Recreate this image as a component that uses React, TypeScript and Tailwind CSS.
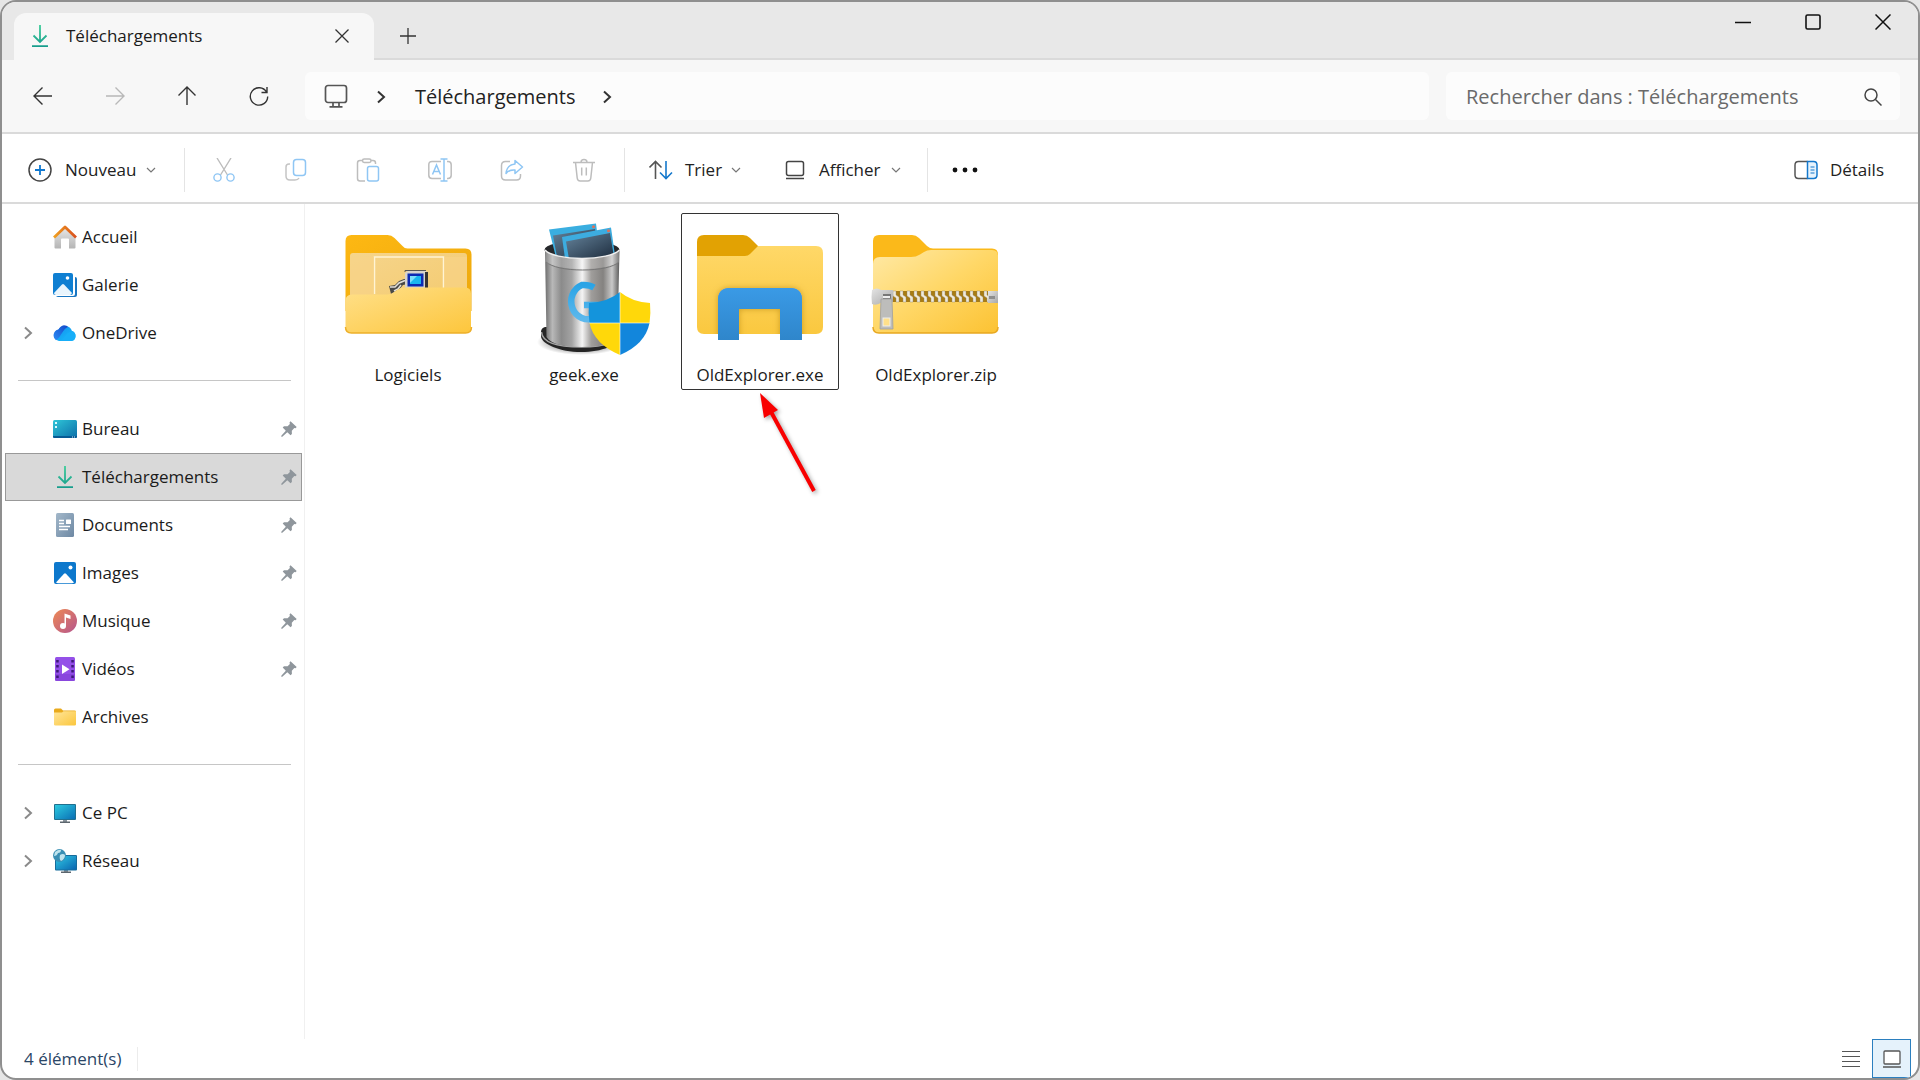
import React from 'react';

const ChevronRight: React.FC<{ className?: string }> = ({ className = 'h-4 w-4 text-[#333]' }) => (
  <svg viewBox="0 0 16 16" className={className} fill="none" stroke="currentColor" strokeWidth="2">
    <path d="M5 2.5 11 8l-6 5.500" />
  </svg>
);

const ChevronDown = () => (
  <svg viewBox="0 0 12 12" className="h-3 w-3 text-[#777]" fill="none" stroke="currentColor" strokeWidth="1.2">
    <path d="M2 4l4 4 4-4" />
  </svg>
);

const DownloadIcon = () => (
  <svg viewBox="0 0 24 24" className="h-6 w-6" fill="none" strokeWidth="1.8">
    <defs>
      <linearGradient id="dl" x1="0" y1="0" x2="0" y2="24" gradientUnits="userSpaceOnUse">
        <stop offset="0" stopColor="#3fcf9a" />
        <stop offset="1" stopColor="#159a8c" />
      </linearGradient>
    </defs>
    <path d="M12 1v17M5.500 11.500 12 18l6.500-6.500M4 22.200h16" stroke="url(#dl)" />
  </svg>
);

const HomeIcon = () => (
  <svg viewBox="0 0 24 24" className="h-6 w-6">
    <defs>
      <linearGradient id="roof" x1="0" x2="1">
        <stop offset="0" stopColor="#f0a020" />
        <stop offset="1" stopColor="#d9501e" />
      </linearGradient>
      <linearGradient id="wall" x1="0" y1="0" x2="0" y2="1">
        <stop offset="0" stopColor="#e6e6e6" />
        <stop offset="1" stopColor="#b5b5b5" />
      </linearGradient>
    </defs>
    <path d="M12 3 1.500 12.500v10q0 1 1 1H8v-9q0-1 1-1h6q1 0 1 1v9h5.500q1 0 1-1v-10z" fill="url(#wall)" />
    <path d="M1 12.500 12 2l11 10.500" fill="none" stroke="url(#roof)" strokeWidth="2.800" strokeLinejoin="round" />
  </svg>
);

const GalleryIcon = () => (
  <svg viewBox="0 0 24 24" className="h-6 w-6">
    <path d="M22 4q2 0 2 2v16q0 2-2 2H5q-2 0-2-2z" fill="#1976c2" />
    <rect x="0" y="0" width="22" height="23" rx="2" fill="#fff" />
    <rect x="0" y="0" width="20" height="22" rx="2" fill="#0f7fd2" />
    <path d="M1 20 9 11.500q1-1 2 0L19 20q-1 2-2 2H3q-2 0-2-2z" fill="#e9f5fd" />
    <circle cx="14.500" cy="5" r="1.800" fill="#fff" />
  </svg>
);

const OneDriveIcon = () => (
  <svg viewBox="0 0 24 24" className="h-6 w-6">
    <defs>
      <linearGradient id="od" x1="0" y1="0" x2="1" y2="1">
        <stop offset="0" stopColor="#1387ee" />
        <stop offset="1" stopColor="#18c4fa" />
      </linearGradient>
      <linearGradient id="odl" x1="0" y1="1" x2="1" y2="0">
        <stop offset="0" stopColor="#2b8cf5" />
        <stop offset="1" stopColor="#1447c8" />
      </linearGradient>
    </defs>
    <path d="M6 20a6 6 0 0 1-.500-11.500A7.500 7.500 0 0 1 19 10a5.200 5.200 0 0 1-.5 10z" fill="url(#od)" />
    <path d="M3 19.200A6 6 0 0 1 5.500 8.500 7.500 7.500 0 0 1 11 4.200q3 .3 4 1.800c-3 1-4 3-6 6s-3 5-6 7.200z" fill="url(#odl)" />
    <path d="M6 20c5-1 6-8 13-10a5.200 5.200 0 0 1-.5 10z" fill="#18aef8" />
  </svg>
);

const DesktopIcon = () => (
  <svg viewBox="0 0 24 24" className="h-6 w-6">
    <defs>
      <linearGradient id="desk" x1="0" y1="0" x2="1" y2="1">
        <stop offset="0" stopColor="#2fc6d8" />
        <stop offset="1" stopColor="#0c6ea8" />
      </linearGradient>
    </defs>
    <rect y="3" width="24" height="18" rx="1.500" fill="url(#desk)" />
    <path d="M2 5h2v2H2zM2 9h2v2H2z" fill="#d9fbff" />
    <path d="M0 19h24v.5q0 1.500-1.500 1.500h-21Q0 21 0 19.500z" fill="#075a94" />
    <path d="M19 19.500h1v1h-1zM21 19.500h1v1h-1z" fill="#c8ecff" />
  </svg>
);

const DocumentIcon = () => (
  <svg viewBox="0 0 24 24" className="h-6 w-6">
    <defs>
      <linearGradient id="doc" x1="0" y1="0" x2="1" y2="1">
        <stop offset="0" stopColor="#a3b8ca" />
        <stop offset="1" stopColor="#6d88a3" />
      </linearGradient>
    </defs>
    <rect x="3" width="18" height="24" rx="1.500" fill="url(#doc)" />
    <path d="M6 7.500h5M6 10.500h5M6 13.500h11M6 16.500h9" stroke="#fff" strokeWidth="1.300" />
    <rect x="13" y="6.500" width="5" height="4.500" rx=".5" fill="#fff" />
  </svg>
);

const PictureIcon = () => (
  <svg viewBox="0 0 24 24" className="h-6 w-6">
    <rect x="1" y="1" width="22" height="22" rx="2" fill="#0d78cc" />
    <path d="M3 21.500 11 12.700q1-1 2 0l8 8.800q-1 .7-2 .7H5q-1 0-2-.7z" fill="#fff" />
    <circle cx="17.500" cy="6.500" r="2" fill="#fff" />
  </svg>
);

const MusicIcon = () => (
  <svg viewBox="0 0 24 24" className="h-6 w-6">
    <defs>
      <linearGradient id="mus" x1="0" y1="0" x2="1" y2="1">
        <stop offset="0" stopColor="#ee8a54" />
        <stop offset="1" stopColor="#b5558e" />
      </linearGradient>
    </defs>
    <circle cx="12" cy="12" r="12" fill="url(#mus)" />
    <circle cx="10" cy="17" r="3" fill="#fff" />
    <path d="M11.500 17V4.500l6 2V10l-4.500-1.500V17z" fill="#fff" />
  </svg>
);

const VideoIcon = () => (
  <svg viewBox="0 0 24 24" className="h-6 w-6">
    <rect x="2" width="20" height="24" rx="1.500" fill="#9450e8" />
    <path d="M2 17h20v5.500q0 1.500-1.500 1.500h-17Q2 24 2 22.500z" fill="#7d3bd2" opacity=".5" />
    <path
      d="M3.200 3h2.500v2.500H3.200zM3.200 8h2.500v2.500H3.200zM3.200 13h2.500v2.500H3.200zM3.200 18.500h2.500V21H3.200zM18.300 3h2.500v2.500h-2.500zM18.300 8h2.500v2.500h-2.500zM18.300 13h2.500v2.500h-2.500zM18.300 18.500h2.500V21h-2.500z"
      fill="#3d1a78"
    />
    <path d="M9 7.500v9.500l7.500-4.700z" fill="#fff" />
  </svg>
);

const SmallFolderIcon = () => (
  <svg viewBox="0 0 24 24" className="h-6 w-6">
    <defs>
      <linearGradient id="sf" x1="0" y1="0" x2="1" y2="1">
        <stop offset="0" stopColor="#ffe599" />
        <stop offset="1" stopColor="#fbc63c" />
      </linearGradient>
    </defs>
    <path d="M1 5q0-1.500 1.500-1.500h5.500l2 2h11.500q1.500 0 1.500 1V14H1z" fill="#e9aa1c" />
    <path d="M1 7.500h8l1.500-1.300H23v13.300q0 1-1.500 1h-19q-1.500 0-1.500-1z" fill="url(#sf)" />
  </svg>
);

const PcIcon = () => (
  <svg viewBox="0 0 24 24" className="h-6 w-6">
    <defs>
      <linearGradient id="pc" x1="0" y1="0" x2="1" y2="1">
        <stop offset="0" stopColor="#2ccae0" />
        <stop offset="1" stopColor="#0a6fb4" />
      </linearGradient>
    </defs>
    <path d="M10 18h4v3h-4z" fill="#8a949c" />
    <path d="M7 20.500h10V22H7z" fill="#5c666e" />
    <rect x="1" y="3" width="22" height="16" rx="1" fill="#20708f" />
    <rect x="2" y="4" width="20" height="14" fill="url(#pc)" />
  </svg>
);

const NetworkIcon = () => (
  <svg viewBox="0 0 24 24" className="h-6 w-6">
    <defs>
      <linearGradient id="net" x1="0" y1="0" x2="1" y2="1">
        <stop offset="0" stopColor="#2fc8e4" />
        <stop offset="1" stopColor="#0a66b0" />
      </linearGradient>
    </defs>
    <path d="M11 21h4v2h-4z" fill="#8a949c" />
    <path d="M8 22.500h10V24H8z" fill="#5c666e" />
    <rect x="2" y="6" width="22" height="15.500" rx="1" fill="#176c9c" />
    <rect x="3" y="7" width="20" height="13.500" fill="url(#net)" />
    <circle cx="6.500" cy="6.500" r="6.500" fill="#3a8fb4" />
    <path d="M2 3q4-3 6-2 0 3-3 3-1 3-4 3zM7 6q3-2 5 0 0 4-4 6-2-2-1-6z" fill="#bfe4ee" />
  </svg>
);

const PinIcon = () => (
  <svg viewBox="0 0 16 16" className="h-4 w-4 text-[#8f969c]" fill="currentColor">
    <path d="M9.500.3 15.700 6l-1.200 1.200-1.200-.1-2.500 2.700.1 3.200-1.400 1.300-3.200-3.100L1.300 15.700H.3v-1L4.800 9.700 1.700 6.600l1.300-1.400 3.600.1 2.300-2.400-.4-1.400z" />
  </svg>
);

interface SideItem {
  label: string;
  icon: React.FC;
  expandable?: boolean;
  pinned?: boolean;
  selected?: boolean;
}

const groups: SideItem[][] = [
  [
    { label: 'Accueil', icon: HomeIcon },
    { label: 'Galerie', icon: GalleryIcon },
    { label: 'OneDrive', icon: OneDriveIcon, expandable: true },
  ],
  [
    { label: 'Bureau', icon: DesktopIcon, pinned: true },
    { label: 'Téléchargements', icon: DownloadIcon, pinned: true, selected: true },
    { label: 'Documents', icon: DocumentIcon, pinned: true },
    { label: 'Images', icon: PictureIcon, pinned: true },
    { label: 'Musique', icon: MusicIcon, pinned: true },
    { label: 'Vidéos', icon: VideoIcon, pinned: true },
    { label: 'Archives', icon: SmallFolderIcon },
  ],
  [
    { label: 'Ce PC', icon: PcIcon, expandable: true },
    { label: 'Réseau', icon: NetworkIcon, expandable: true },
  ],
];

const SideRow: React.FC<{ item: SideItem }> = ({ item }) => {
  const Icon = item.icon;
  return (
    <li>
      <button
        type="button"
        className={
          item.selected
            ? 'flex h-12 w-full items-center border border-[#999] bg-[#d9d9d9] pr-1'
            : 'flex h-12 w-full items-center border border-transparent pr-1'
        }
      >
        <span className="flex w-[47px] justify-center pr-1">
          {item.expandable && <ChevronRight className="h-4 w-4 text-[#8a8a8a]" />}
        </span>
        <Icon />
        <span className="ml-[5px] flex-1 text-left text-[17px] text-[#1b1b1b]">{item.label}</span>
        {item.pinned && <PinIcon />}
      </button>
    </li>
  );
};

const FolderArt = () => (
  <svg viewBox="0 0 144 140" className="h-[140px] w-36">
    <defs>
      <linearGradient id="fb" x1="0" y1="0" x2="1" y2="1">
        <stop offset="0" stopColor="#fdb813" />
        <stop offset="1" stopColor="#eda80c" />
      </linearGradient>
      <linearGradient id="ff" x1="0" y1="0" x2="1" y2="1">
        <stop offset="0" stopColor="#ffe08a" />
        <stop offset="1" stopColor="#fdc63c" />
      </linearGradient>
      <linearGradient id="pp" x1="0" y1="0" x2="1" y2="1">
        <stop offset="0" stopColor="#f6d58c" />
        <stop offset="1" stopColor="#f3c96c" />
      </linearGradient>
    </defs>
    <path d="M9.500 25q0-6 6-6h36q4 0 7 3l8 8q2 2.500 5 2.500h58q6 0 6 6V95h-126z" fill="url(#fb)" />
    <rect x="14" y="37" width="117" height="60" rx="3" fill="url(#pp)" />
    <path d="M38.500 78V41h69v34" fill="none" stroke="#fff4d4" strokeWidth="1.500" />
    <path d="M108 41h23v34h-23zM14 41h24v38H14z" fill="#f8d488" opacity=".6" />
    <path d="M53 70 59 69l4-4 5-2h4v5l-5 1-5 6-7 3z" fill="#4a4a48" />
    <path d="M54 71h5l4-4 6-2.500M58 75l4-2 3-4" stroke="#e4e0d8" strokeWidth="1.500" fill="none" />
    <path d="M69 57l3-2h18l2 2v20H69z" fill="#d6d3cd" />
    <path d="M89 56h3v20h-3z" fill="#333" />
    <path d="M69 56V54.500h21" stroke="#555" fill="none" />
    <rect x="71.500" y="57.500" width="16" height="13" fill="#0b2ab4" />
    <path d="M74 60h11v8H74z" fill="#19b6ef" />
    <path d="M74 60h7l-7 7z" fill="#7be0fb" />
    <path d="M9.500 85q0-6.500 6.500-6.500h35q4 0 7-2.500l3-2q3-2.500 7-2.500h61q6 0 6 6V112q0 5-6 5h-113.500q-6 0-6-5z" fill="url(#ff)" />
    <path d="M9.500 111q0 6 6 6h114q6 0 6-6" fill="none" stroke="#edb02a" strokeWidth="1.500" />
  </svg>
);

const GeekArt = () => (
  <svg viewBox="0 0 144 140" className="h-[140px] w-36">
    <defs>
      <linearGradient id="steel" x1="0" x2="1">
        <stop offset="0" stopColor="#6c6c6c" />
        <stop offset=".1" stopColor="#b8b8b8" />
        <stop offset=".22" stopColor="#8b8b8b" />
        <stop offset=".36" stopColor="#a4a4a4" />
        <stop offset=".5" stopColor="#f4f4f4" />
        <stop offset=".62" stopColor="#a09e9c" />
        <stop offset=".78" stopColor="#848280" />
        <stop offset=".9" stopColor="#c9c9c9" />
        <stop offset="1" stopColor="#5a5a5a" />
      </linearGradient>
      <linearGradient id="page" x1="0" y1="0" x2="1" y2="1">
        <stop offset="0" stopColor="#66849c" />
        <stop offset="1" stopColor="#1c2b3c" />
      </linearGradient>
      <radialGradient id="shade">
        <stop offset=".6" stopColor="#000" stopOpacity=".35" />
        <stop offset="1" stopColor="#000" stopOpacity="0" />
      </radialGradient>
      <linearGradient id="gee" x1="0" y1="0" x2="0" y2="1">
        <stop offset="0" stopColor="#2aa4e6" />
        <stop offset="1" stopColor="#5cb8ec" />
      </linearGradient>
    </defs>
    <ellipse cx="69" cy="126" rx="44" ry="13" fill="url(#shade)" />
    <path d="M29 116q0-4 4-5h70q4 1 4 5v5c0 8-17 15-38 15s-40-8-40-16z" fill="#252525" />
    <path d="M29.500 116q1 15 40 15 36.500 0 37.500-15" fill="none" stroke="#a5a5a5" strokeWidth="1.500" />
    <ellipse cx="70" cy="34" rx="37.500" ry="9.500" fill="#26282b" />
    <path d="M37 13.500 84 7.500l3 24-43 10z" fill="#3aaee0" />
    <path d="M41 19.500 83 13l3 20-41 8z" fill="url(#page)" />
    <circle cx="81.500" cy="10.700" r="1.500" fill="#e07058" />
    <path d="M50 21 99 11.500l4 28-46 5-4-2z" fill="#3dacdf" />
    <path d="M54 25.500 98 17l4 24-45 2z" fill="url(#page)" />
    <circle cx="96.500" cy="14.700" r="1.500" fill="#e07058" />
    <path d="M33 34c4 5 20 8.500 37 8.500S103 39 107.500 34l-2 87C101 128 87 131 69.500 131s-31-3-35-10z" fill="url(#steel)" />
    <path d="M33 34c4 5 20 8.500 37 8.500S103 39 107.500 34" fill="none" stroke="#eee" strokeWidth="1.500" />
    <path d="M33.500 34c4 5 20 8.500 37 8.500S103 39 107 34v12c-5 4-18 7-36.500 7S38 50 33.500 46z" fill="#fff" opacity=".18" />
    <path d="M34 46c6 5 19 8 36.500 8s31-3 36.500-8" fill="none" stroke="#777" />
    <path d="M82 71.500Q77 68.500 70 69a17 17.500 0 1 0 13 33V89H72" fill="none" stroke="url(#gee)" strokeWidth="6.500" />
    <path d="M108 76q-12 10-31 11-1 10 .5 20.500H108z" fill="#1494dc" />
    <path d="M108 76q12 10 30 11 1 10-.5 20.500H108z" fill="#ffd80a" />
    <path d="M77.500 107H108v32q-26-11-30.500-32z" fill="#ffd80a" />
    <path d="M108 107h29.500q-4 21-29.500 32z" fill="#1286dc" />
    <path d="M108 76v63M77 107h61" stroke="#fff" strokeWidth="1" opacity=".6" />
  </svg>
);

const ExplorerArt = () => (
  <svg viewBox="0 0 144 140" className="h-[140px] w-36">
    <defs>
      <linearGradient id="ef" x1="0" y1="0" x2="0" y2="1">
        <stop offset="0" stopColor="#ffd868" />
        <stop offset="1" stopColor="#fac83f" />
      </linearGradient>
      <linearGradient id="eb" x1="0" y1="0" x2="0" y2="1">
        <stop offset="0" stopColor="#3a9ae6" />
        <stop offset="1" stopColor="#2f86cb" />
      </linearGradient>
      <filter id="glow" x="-20%" y="-20%" width="140%" height="140%">
        <feDropShadow dx="0" dy="0" stdDeviation="3" floodColor="#a87400" floodOpacity=".55" />
      </filter>
      <clipPath id="eclip">
        <path d="M9 36 60 40l10-10h58q7 0 7 7v74q0 7-7 7H16q-7 0-7-7z" />
      </clipPath>
    </defs>
    <path d="M9 26q0-7 7-7h39q4 0 7 3l8 8v12H9z" fill="#e2a203" />
    <path d="M9 40h48q3 0 5-2l8-8h58q7 0 7 7v74q0 7-7 7H16q-7 0-7-7z" fill="url(#ef)" />
    <g clipPath="url(#eclip)">
      <path d="M30 124V84q0-12 12-12h60q12 0 12 12v40H92V93H51v31z" fill="#3a9ae6" filter="url(#glow)" />
    </g>
    <path d="M30 124V84q0-12 12-12h60q12 0 12 12v40H92V93H51v31z" fill="url(#eb)" />
  </svg>
);

const teeth = Array.from({ length: 14 }, (_, i) => 29 + i * 7);

const ZipArt = () => (
  <svg viewBox="0 0 144 140" className="h-[140px] w-36">
    <defs>
      <linearGradient id="zf" x1="0" y1="0" x2="1" y2="1">
        <stop offset="0" stopColor="#ffe9a6" />
        <stop offset=".5" stopColor="#ffd766" />
        <stop offset="1" stopColor="#fcc232" />
      </linearGradient>
      <linearGradient id="zm" x1="0" y1="0" x2="1" y2="1">
        <stop offset="0" stopColor="#e4e4e4" />
        <stop offset="1" stopColor="#a8a8a8" />
      </linearGradient>
    </defs>
    <path d="M9 25q0-6 6-6h33q4 0 7 3l8 8q3 2.500 6 2.500h59q6 0 6 6V60H9z" fill="#fbb91a" />
    <path d="M9 48q0-7 7-7h31q5 0 9-2.500l4-2.500q3-2 7-2h61q6 0 6 6v71q0 6-6 6H15q-6 0-6-6z" fill="url(#zf)" />
    <path d="M9 111q0 6 6 6h113q6 0 6-6" fill="none" stroke="#e8a820" strokeWidth="1.500" />
    <rect x="28" y="75" width="96" height="11" fill="#a87c12" />
    {teeth.map((x) => (
      <path key={x} d={`M${x} 75h3v4l3 2v5h-3v-4l-3-2z`} fill="#f0ead8" stroke="#8a8478" strokeWidth=".4" />
    ))}
    <path d="M124 75h10v12h-10z" fill="url(#zm)" />
    <path d="M125 80h6v3h-6z" fill="#8e8e8e" />
    <path d="M8 74q5-3 9 0h12v12H18q-5 4-10 2-1-7 0-14z" fill="url(#zm)" />
    <path d="M19 78h8v5h-8z" fill="#777" />
    <path d="M19 80h7v2h-7z" fill="#eee" />
    <path d="M17 83h11l1 30H16z" fill="#bdbdbb" stroke="#a0a09e" strokeWidth=".8" />
    <rect x="19" y="102" width="7" height="8" fill="#ffe08a" stroke="#eee" />
  </svg>
);

const files = [
  { name: 'Logiciels', art: FolderArt },
  { name: 'geek.exe', art: GeekArt },
  { name: 'OldExplorer.exe', art: ExplorerArt, selected: true },
  { name: 'OldExplorer.zip', art: ZipArt },
];

const PointerArrow = () => (
  <svg
    viewBox="0 0 70 116"
    className="pointer-events-none absolute top-full left-1/2 h-[116px] w-[70px] drop-shadow-[2px_2px_2px_rgba(0,0,0,0.35)]"
  >
    <path d="M10 20 54 101" stroke="#f80000" strokeWidth="4" />
    <path d="M0 3 4 28 18 20z" fill="#f80000" />
  </svg>
);

const CutIcon = () => (
  <svg viewBox="0 0 24 24" className="h-6 w-6" fill="none" strokeWidth="1.400">
    <path d="M5 0 15.500 17M19 0 8.500 17" stroke="#bdbdbd" />
    <circle cx="5.500" cy="19.500" r="3.600" stroke="#8fc6f4" />
    <circle cx="18.500" cy="19.500" r="3.600" stroke="#8fc6f4" />
  </svg>
);

const CopyIcon = () => (
  <svg viewBox="0 0 24 24" className="h-6 w-6" fill="none" strokeWidth="1.500">
    <path d="M6 6H5Q2 6 2 9v9q0 4 4 4h5q3 0 4-2" stroke="#c4c4c4" />
    <rect x="9.500" y="1.500" width="12" height="16" rx="3" stroke="#8fc6f4" />
  </svg>
);

const PasteIcon = () => (
  <svg viewBox="0 0 24 24" className="h-6 w-6" fill="none" strokeWidth="1.500">
    <path d="M6.500 2.500H4q-2.500 0-2.500 2.500v15.500Q1.500 23 4 23h5M15 2.500h2q2.500 0 2.500 2.500v1" stroke="#bdbdbd" />
    <rect x="6.500" y="1" width="8.500" height="3.500" rx="1.700" stroke="#bdbdbd" />
    <rect x="11.500" y="8.500" width="11" height="14.500" rx="2" stroke="#8fc6f4" />
  </svg>
);

const RenameIcon = () => (
  <svg viewBox="0 0 24 24" className="h-6 w-6" fill="none" strokeWidth="1.500">
    <path d="M13 3.500H4Q.8 3.500.8 6.700v10.600q0 3.200 3.200 3.200h9M19 3.500h1q3.200 0 3.200 3.200v10.600q0 3.200-3.200 3.200h-1" stroke="#bdbdbd" />
    <path d="M4.500 16.500 8.500 7l4 9.500M6 13.500h5M16 1v22M12.500 1h7M12.500 23h7" stroke="#8fc6f4" />
  </svg>
);

const ShareIcon = () => (
  <svg viewBox="0 0 24 24" className="h-6 w-6" fill="none" strokeWidth="1.500" strokeLinejoin="round">
    <path d="M10 3.500H5.500Q1.500 3.500 1.500 7.500V18q0 4 4 4h11q4 0 4-4v-2" stroke="#bdbdbd" />
    <path d="M15 2.500 22.500 9 15 15.500V12q-6-.5-9 3.500 1-9 9-9.500z" stroke="#8fc6f4" />
  </svg>
);

const TrashIcon = () => (
  <svg viewBox="0 0 24 24" className="h-6 w-6" fill="none" stroke="#bdbdbd" strokeWidth="1.500">
    <path d="M1 4.500h22M9 4.500q0-3 3-3t3 3M3.500 4.500 5.200 20q.3 3 3 3h7.600q2.700 0 3-3L20.500 4.500M9.700 9.500v8M14.300 9.500v8" />
  </svg>
);

const editActions = [
  { label: 'Couper', icon: CutIcon },
  { label: 'Copier', icon: CopyIcon },
  { label: 'Coller', icon: PasteIcon },
  { label: 'Renommer', icon: RenameIcon },
  { label: 'Partager', icon: ShareIcon },
  { label: 'Supprimer', icon: TrashIcon },
];

const navActions = [
  { label: 'Précédent', path: 'M21 12H3.500M11.500 3.500 3 12l8.500 8.500', color: 'text-[#333]' },
  { label: 'Suivant', path: 'M3 12h17.500M12.500 3.500 21 12l-8.500 8.500', color: 'text-[#b8b8b8]' },
  { label: 'Dossier parent', path: 'M12 21V3.500M3.500 11.500 12 3l8.500 8.500', color: 'text-[#333]' },
  { label: 'Actualiser', path: 'M19.500 8A8.700 8.700 0 1 0 20.700 12.500M20 3v5.500h-5.500', color: 'text-[#333]' },
];

const ToolbarDivider = () => <span className="h-11 w-px bg-[#e4e4e4]" />;

const TitleBar = () => (
  <header className="flex h-[58px] shrink-0 bg-[#e8e8e8] pl-3">
    <div className="flex w-[360px] pt-[11px]">
      <div className="flex w-full items-center rounded-t-xl bg-[#f7f7f7] pr-4 pb-[2px] pl-[14px]">
        <DownloadIcon />
        <span className="ml-[14px] flex-1 text-[17px] font-medium text-[#1b1b1b]">Téléchargements</span>
        <button type="button" aria-label="Fermer l'onglet" className="flex h-8 w-8 items-center justify-center">
          <svg viewBox="0 0 14 14" className="h-[14px] w-[14px]" stroke="#333" strokeWidth="1.300">
            <path d="M.5.500l13 13M13.500.500l-13 13" />
          </svg>
        </button>
      </div>
    </div>
    <div className="flex flex-1 border-b-2 border-[#dadada]">
      <button type="button" aria-label="Nouvel onglet" className="mt-4 ml-[18px] flex h-9 w-8 items-center justify-center">
        <svg viewBox="0 0 16 16" className="h-4 w-4" stroke="#333" strokeWidth="1.300">
          <path d="M8 0v16M0 8h16" />
        </svg>
      </button>
      <div className="ml-auto flex h-10 items-center">
        <button type="button" aria-label="Réduire" className="flex h-10 w-[70px] items-center justify-center">
          <svg viewBox="0 0 16 16" className="h-4 w-4" stroke="#111" strokeWidth="1.300">
            <path d="M0 8.500h16" />
          </svg>
        </button>
        <button type="button" aria-label="Agrandir" className="flex h-10 w-[70px] items-center justify-center">
          <svg viewBox="0 0 16 16" className="h-4 w-4" fill="none" stroke="#111" strokeWidth="1.600">
            <rect x="1" y="1" width="14" height="14" rx="1.500" />
          </svg>
        </button>
        <button type="button" aria-label="Fermer" className="flex h-10 w-[70px] items-center justify-center">
          <svg viewBox="0 0 16 16" className="h-4 w-4" stroke="#111" strokeWidth="1.500">
            <path d="M.5.500l15 15M15.500.500l-15 15" />
          </svg>
        </button>
      </div>
    </div>
  </header>
);

const NavBar = () => (
  <div className="flex h-[74px] shrink-0 items-center border-b-2 border-[#dadada] bg-[#f7f7f7] pr-[18px] pl-[21px]">
    <nav className="flex gap-8" aria-label="Navigation">
      {navActions.map((a) => (
        <button key={a.label} type="button" aria-label={a.label} className="flex h-10 w-10 items-center justify-center">
          <svg
            viewBox="0 0 24 24"
            className={`h-6 w-6 ${a.color}`}
            fill="none"
            stroke="currentColor"
            strokeWidth="1.400"
          >
            <path d={a.path} />
          </svg>
        </button>
      ))}
    </nav>
    <div className="ml-[26px] flex h-12 flex-1 items-center rounded-md bg-[#fcfcfc] pl-[19px]">
      <svg viewBox="0 0 24 24" className="h-6 w-6" fill="none" stroke="#555" strokeWidth="1.700">
        <rect x="1.500" y="1.500" width="21" height="17" rx="2.500" />
        <path d="M9 18.500v4M15 18.500v4M5.500 22.800h13" />
      </svg>
      <span className="ml-[25px] pt-[2px]">
        <ChevronRight />
      </span>
      <button type="button" className="ml-[26px] pt-[2px] text-[20px] text-[#222]">
        Téléchargements
      </button>
      <span className="ml-6 pt-[2px]">
        <ChevronRight />
      </span>
    </div>
    <label className="ml-[17px] flex h-12 w-[454px] items-center rounded-md bg-[#fcfcfc] pt-[2px] pr-[18px] pl-5">
      <input
        type="search"
        aria-label="Rechercher"
        placeholder="Rechercher dans : Téléchargements"
        className="min-w-0 flex-1 bg-transparent text-[20px] outline-none placeholder:text-[#6a6a6a]"
      />
      <svg viewBox="0 0 18 18" className="h-[18px] w-[18px]" fill="none" stroke="#444" strokeWidth="1.500">
        <circle cx="7" cy="7" r="6" />
        <path d="M11.500 11.500l6 6" />
      </svg>
    </label>
  </div>
);

const Toolbar = () => (
  <div className="flex h-[70px] shrink-0 items-center border-b-2 border-[#dadada] bg-white pt-1 pr-[34px] pl-[26px] text-[17px] text-[#222]">
    <button type="button" className="flex w-[156px] items-center">
      <svg viewBox="0 0 24 24" className="h-6 w-6" fill="none" strokeWidth="1.500">
        <circle cx="12" cy="12" r="11" stroke="#444" />
        <path d="M12 7v10M7 12h10" stroke="#0f78d0" strokeWidth="1.800" />
      </svg>
      <span className="mr-[9px] ml-[13px]">Nouveau</span>
      <ChevronDown />
    </button>
    <ToolbarDivider />
    <div className="ml-[19px] flex gap-8">
      {editActions.map((a) => {
        const Icon = a.icon;
        return (
          <button key={a.label} type="button" disabled aria-label={a.label} className="flex h-10 w-10 items-center justify-center">
            <Icon />
          </button>
        );
      })}
    </div>
    <span className="ml-5 flex">
      <ToolbarDivider />
    </span>
    <button type="button" className="ml-6 flex w-[136px] items-center">
      <svg viewBox="0 0 24 20" className="h-5 w-6" fill="none" strokeWidth="1.600">
        <path d="M6.500 19V1.500M.5 7.500l6-6 6 6" stroke="#555" />
        <path d="M17 1v17.500M11 12.500l6 6 6-6" stroke="#1478cc" />
      </svg>
      <span className="mr-2 ml-3">Trier</span>
      <ChevronDown />
    </button>
    <button type="button" className="flex w-[142px] items-center">
      <svg viewBox="0 0 20 20" className="h-5 w-5" fill="none" stroke="#444" strokeWidth="1.500">
        <rect x="1.500" y="1.500" width="17" height="14" rx="2" />
        <path d="M1 18.500h18" />
      </svg>
      <span className="mr-[9px] ml-[14px]">Afficher</span>
      <ChevronDown />
    </button>
    <ToolbarDivider />
    <button type="button" aria-label="Plus d'options" className="ml-6 flex h-10 items-center">
      <svg viewBox="0 0 26 6" className="h-[6px] w-[26px]" fill="#111">
        <circle cx="3" cy="3" r="2.400" />
        <circle cx="13" cy="3" r="2.400" />
        <circle cx="23" cy="3" r="2.400" />
      </svg>
    </button>
    <button type="button" className="ml-auto flex items-center gap-3">
      <svg viewBox="0 0 24 20" className="h-5 w-6" fill="none" strokeWidth="1.500">
        <path d="M13.500 1.500h-9q-3.500 0-3.500 3.500v10q0 3.500 3.500 3.500h9" stroke="#555" />
        <path d="M13.500 1.500h6q3.500 0 3.500 3.500v10q0 3.500-3.500 3.500h-6z" stroke="#1478cc" fill="#e6f3fd" />
        <path d="M16.500 7h4M16.500 10h4M16.500 13h4" stroke="#1478cc" strokeWidth="1.200" />
      </svg>
      Détails
    </button>
  </div>
);

const Sidebar = () => (
  <aside className="w-[303px] shrink-0 border-r border-[#f0f0f0] pt-[9px] pr-[2px] pl-[3px]">
    {groups.map((items, i) => (
      <React.Fragment key={i}>
        {i > 0 && (
          <div className="flex h-12 items-center pr-[11px] pb-[2px] pl-[13px]">
            <hr className="w-full border-[#c6c6c6]" />
          </div>
        )}
        <ul>
          {items.map((item) => (
            <SideRow key={item.label} item={item} />
          ))}
        </ul>
      </React.Fragment>
    ))}
  </aside>
);

const FileGrid = () => (
  <main className="flex flex-1 flex-wrap content-start gap-[18px] pt-[9px] pl-6">
    {files.map(({ name, art: Art, selected }) => (
      <div key={name} className="relative">
        <button
          type="button"
          className={
            selected
              ? 'flex w-[158px] flex-col items-center rounded-[2px] border border-[#333] pt-[2px]'
              : 'flex w-[158px] flex-col items-center border border-transparent pt-[2px]'
          }
        >
          <Art />
          <span className="pt-1 text-[17px] leading-[29px] text-[#1b1b1b]">{name}</span>
        </button>
        {selected && <PointerArrow />}
      </div>
    ))}
  </main>
);

const StatusBar = () => (
  <footer className="flex h-[39px] shrink-0 items-center pr-[7px] pl-[22px]">
    <span className="text-[17px] text-[#2b4666]">4 élément(s)</span>
    <span className="ml-4 h-6 w-px bg-[#ececec]" />
    <button type="button" aria-label="Affichage détaillé" className="ml-auto flex h-[39px] w-10 items-center justify-center">
      <svg viewBox="0 0 18 18" className="h-[18px] w-[18px]" stroke="#555" strokeWidth="1.200">
        <path d="M0 1.500h18M0 6.500h18M0 11.500h18M0 16.500h18" />
      </svg>
    </button>
    <button
      type="button"
      aria-label="Grandes icônes"
      className="ml-[1px] flex h-[39px] w-[39px] items-center justify-center border border-[#2b7fbf] bg-[#e5f2fb]"
    >
      <svg viewBox="0 0 18 18" className="h-[18px] w-[18px]" fill="#fff" stroke="#555" strokeWidth="1.300">
        <rect x="1" y="1" width="16" height="13" rx="1" />
        <path d="M0 17h18" />
      </svg>
    </button>
  </footer>
);

export default function App() {
  return (
    <div className="h-screen bg-[#e6e6e6] font-['Open_Sans','Noto_Sans',sans-serif]">
      <div className="flex h-full flex-col overflow-hidden rounded-2xl border-2 border-[#8f8f8f] bg-white">
        <TitleBar />
        <NavBar />
        <Toolbar />
        <div className="flex min-h-0 flex-1">
          <Sidebar />
          <FileGrid />
        </div>
        <StatusBar />
      </div>
    </div>
  );
}
